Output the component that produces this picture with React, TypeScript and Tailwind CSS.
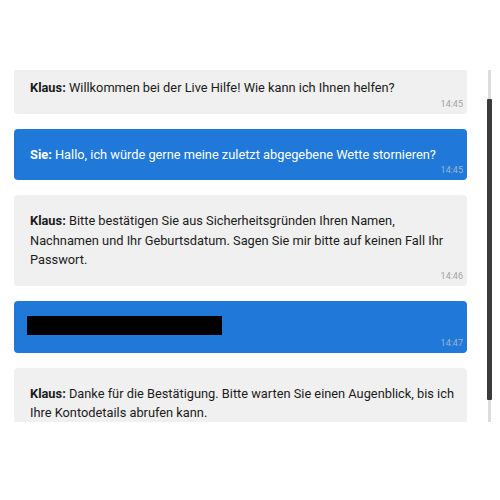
const messages = [
  { from: "Klaus", text: "Willkommen bei der Live Hilfe! Wie kann ich Ihnen helfen?", time: "14:45" },
  { from: "Sie", text: "Hallo, ich würde gerne meine zuletzt abgegebene Wette stornieren?", time: "14:45" },
  {
    from: "Klaus",
    text: "Bitte bestätigen Sie aus Sicherheitsgründen Ihren Namen, Nachnamen und Ihr Geburtsdatum. Sagen Sie mir bitte auf keinen Fall Ihr Passwort.",
    time: "14:46",
  },
  { from: "Sie", text: "", time: "14:47", redacted: true },
  {
    from: "Klaus",
    text: "Danke für die Bestätigung. Bitte warten Sie einen Augenblick, bis ich Ihre Kontodetails abrufen kann.",
    time: "14:48",
  },
];

export default function App() {
  return (
    <div className="w-[500px] h-[500px] bg-white font-['Roboto',sans-serif]">
      <div className="pt-[70px] flex">
        <div className="w-[467px] h-[352px] overflow-hidden pl-[14px]">
          <div className="-mt-2 flex flex-col gap-[15px]">
            {messages.map((m, i) => {
              const mine = m.from === "Sie";
              return (
                <div
                  key={i}
                  className={`rounded-[4px] pl-4 pr-1 pt-4 pb-[4px] ${
                    mine ? "bg-[#2079d9] text-white" : "bg-[#f0f0f0] text-[#1b1b1b]"
                  }`}
                >
                  {m.redacted ? (
                    <div className="-ml-[3px] -mt-px mb-[2px] h-[19px] w-[195px] bg-black" />
                  ) : (
                    <p className="pr-[2px] text-[12.8px] leading-[19.5px]">
                      <span className="font-bold">{m.from}:</span> {m.text}
                    </p>
                  )}
                  <div
                    className={`text-right text-[9px] leading-[12px] ${
                      mine ? "text-[#9db3cf]" : "text-[#a3a3a3]"
                    }`}
                  >
                    {m.time}
                  </div>
                </div>
              );
            })}
          </div>
        </div>
        <div className="ml-[20px] w-[5px] h-[352px] flex flex-col items-center">
          <div className="w-[3px] h-[29px] bg-[#dcdcdc]" />
          <div className="w-[5px] h-[301px] bg-[#3b3b3b] rounded-[1px]" />
          <div className="w-[3px] h-[22px] bg-[#dcdcdc]" />
        </div>
      </div>
    </div>
  );
}
